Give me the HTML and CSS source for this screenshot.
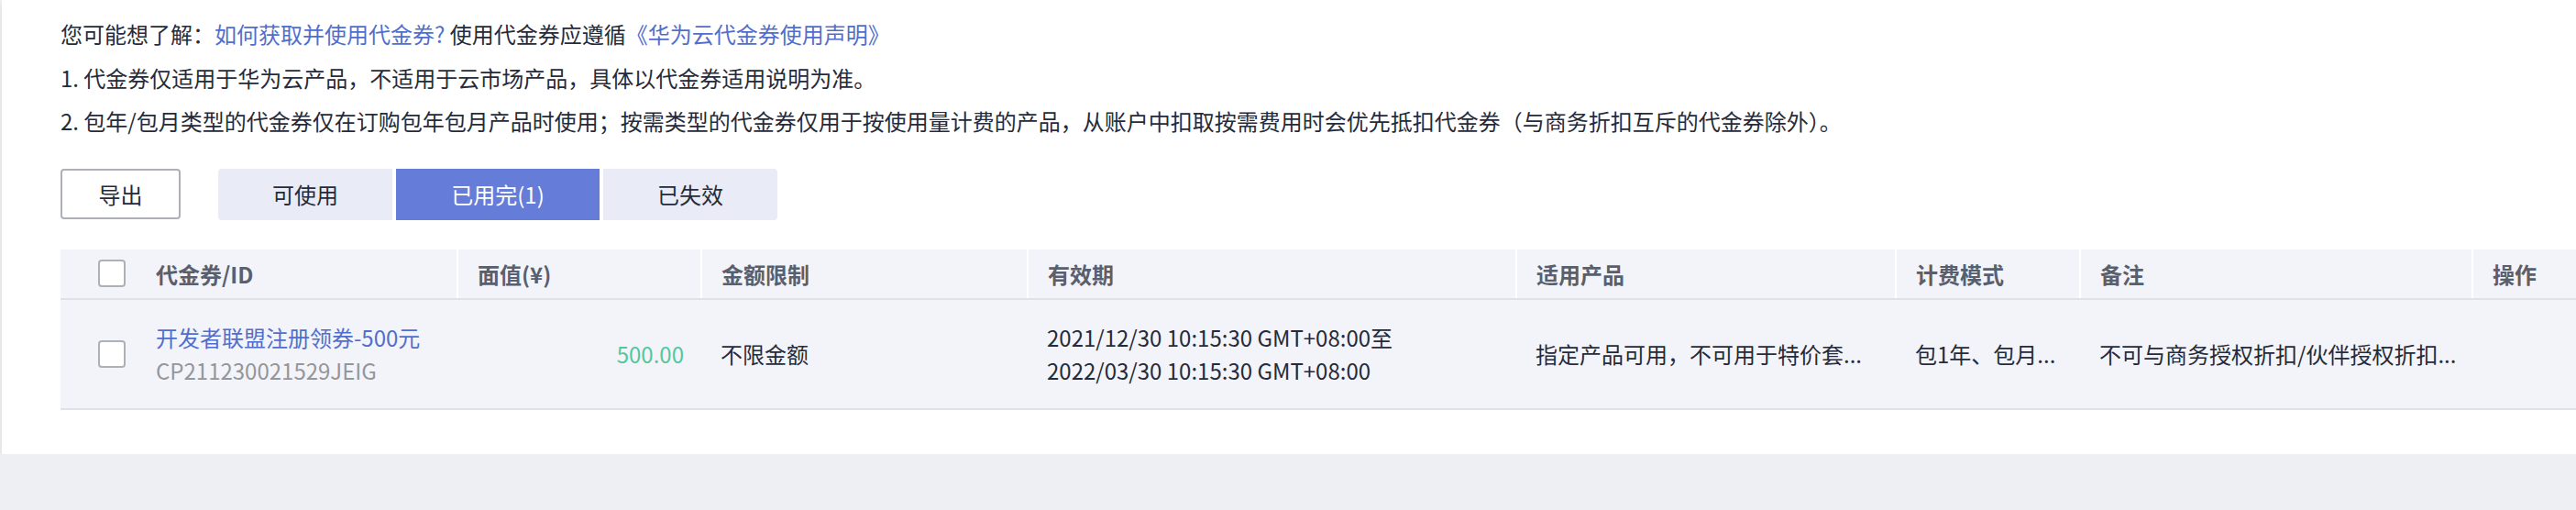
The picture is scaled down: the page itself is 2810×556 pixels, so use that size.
FILE: index.html
```html
<!DOCTYPE html>
<html lang="zh-CN">
<head>
    <meta charset="UTF-8">
    <title>代金券</title>
    <link rel="stylesheet" href="styles.css">
</head>
<body>
    <div class="panel">
        <div class="notes">
            <p>您可能想了解：<a href="#">如何获取并使用代金券?</a> 使用代金券应遵循<a href="#">《华为云代金券使用声明》</a></p>
            <p>1. 代金券仅适用于华为云产品，不适用于云市场产品，具体以代金券适用说明为准。</p>
            <p>2. 包年/包月类型的代金券仅在订购包年包月产品时使用；按需类型的代金券仅用于按使用量计费的产品，从账户中扣取按需费用时会优先抵扣代金券（与商务折扣互斥的代金券除外）。</p>
        </div>

        <div class="toolbar">
            <button class="btn-export">导出</button>
            <div class="tabs">
                <button class="tab">可使用</button>
                <button class="tab active">已用完(1)</button>
                <button class="tab">已失效</button>
            </div>
        </div>

        <table class="coupon-table">
            <colgroup>
                <col class="c-name">
                <col class="c-value">
                <col class="c-limit">
                <col class="c-date">
                <col class="c-product">
                <col class="c-mode">
                <col class="c-remark">
                <col class="c-op">
            </colgroup>
            <thead>
                <tr>
                    <th><div class="name-cell"><span class="checkbox"></span>代金券/ID</div></th>
                    <th>面值(¥)</th>
                    <th>金额限制</th>
                    <th>有效期</th>
                    <th>适用产品</th>
                    <th>计费模式</th>
                    <th>备注</th>
                    <th>操作</th>
                </tr>
            </thead>
            <tbody>
                <tr>
                    <td>
                        <div class="name-cell">
                            <span class="checkbox"></span>
                            <div>
                                <a href="#" class="coupon-name">开发者联盟注册领券-500元</a>
                                <div class="coupon-id">CP211230021529JEIG</div>
                            </div>
                        </div>
                    </td>
                    <td class="amount">500.00</td>
                    <td>不限金额</td>
                    <td class="date">2021/12/30 10:15:30 GMT+08:00至<br>2022/03/30 10:15:30 GMT+08:00</td>
                    <td>指定产品可用，不可用于特价套...</td>
                    <td>包1年、包月...</td>
                    <td>不可与商务授权折扣/伙伴授权折扣...</td>
                    <td></td>
                </tr>
            </tbody>
        </table>
    </div>
</body>
</html>
```

FILE: styles.css
```css
:root {
    --text-color: #252b3a;
    --link-color: #526ecc;
    --brand-color: #657dd9;
    --tab-bg: #e9ebf7;
    --table-bg: #f3f4f9;
    --line-color: #dfe1e6;
    --page-bg: #eeeff3;
}

* {
    margin: 0;
    padding: 0;
    box-sizing: border-box;
}

html, body {
    overflow: hidden;
}

body {
    font-family: "Noto Sans CJK SC", "Noto Sans", sans-serif;
    font-size: 24px;
    color: var(--text-color);
    background-color: var(--page-bg);
}

a {
    color: var(--link-color);
    text-decoration: none;
}

.panel {
    width: 3000px;
    margin-left: 2px;
    padding: 13px 64px 48px;
    background-color: #fff;
    box-shadow: 0 3px 8px rgba(0, 0, 0, 0.08);
}

.notes p {
    line-height: 47.5px;
    white-space: nowrap;
}

/* toolbar */
.toolbar {
    display: flex;
    align-items: center;
    gap: 41px;
    margin-top: 28px;
}

.btn-export {
    width: 131px;
    height: 55px;
    border: 2px solid #adb0b8;
    border-radius: 4px;
    background-color: #fff;
    font: inherit;
    color: var(--text-color);
}

.tabs {
    display: flex;
    gap: 4px;
}

.tab {
    height: 56px;
    border: none;
    background-color: var(--tab-bg);
    font: inherit;
    color: var(--text-color);
}

.tab:nth-child(1) {
    width: 190px;
    border-radius: 4px 0 0 4px;
}

.tab:nth-child(2) {
    width: 222px;
}

.tab:nth-child(3) {
    width: 190px;
    border-radius: 0 4px 4px 0;
}

.tab.active {
    background-color: var(--brand-color);
    color: #fff;
}

/* table */
.coupon-table {
    margin-top: 32px;
    width: 2831px;
    table-layout: fixed;
    border-collapse: collapse;
    background-color: var(--table-bg);
}

.c-name { width: 433px; }
.c-value { width: 266px; }
.c-limit { width: 356px; }
.c-date { width: 533px; }
.c-product { width: 414px; }
.c-mode { width: 201px; }
.c-remark { width: 428px; }
.c-op { width: 200px; }

.coupon-table th {
    height: 54px;
    padding: 0 21px;
    text-align: left;
    font-weight: 700;
    color: #5a5f6d;
    border-left: 2px solid #fff;
    border-bottom: 2px solid var(--line-color);
}

.coupon-table th:first-child {
    border-left: none;
}

.coupon-table td {
    height: 120px;
    padding: 0 21px;
    white-space: nowrap;
    overflow: hidden;
    border-bottom: 2px solid var(--line-color);
}

.coupon-table th:first-child,
.coupon-table td:first-child {
    padding-left: 41px;
}

.name-cell {
    display: flex;
    align-items: center;
    gap: 33px;
}

.checkbox {
    flex: none;
    width: 30px;
    height: 30px;
    border: 2px solid #adb0b8;
    border-radius: 4px;
    background-color: #fff;
}

.coupon-name {
    display: block;
    line-height: 36px;
}

.coupon-id {
    line-height: 36px;
    color: #959699;
}

.amount {
    text-align: right;
    color: #55c79e;
}

.coupon-table td.amount {
    padding-right: 19px;
}

.date {
    line-height: 36px;
}
```
